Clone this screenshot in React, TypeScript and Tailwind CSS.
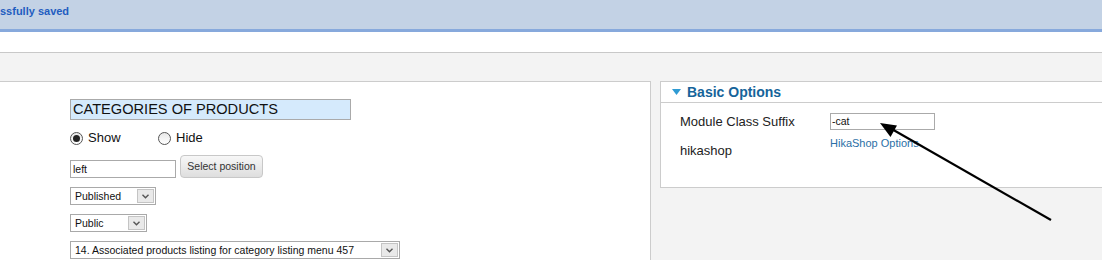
import React from "react";

const Chevron = () => (
  <svg width="7" height="5" viewBox="0 0 7 5" className="mt-[4px]">
    <path d="M0.5 0.8 L3.5 3.8 L6.5 0.8" fill="none" stroke="#555" strokeWidth="1.4" />
  </svg>
);

const Select = ({ value, width }: { value: string; width: string }) => (
  <div className={`flex h-[18px] ${width} border border-[#a9a9a9] bg-white`}>
    <div className="flex-1 pl-[4px] text-[10.5px] leading-[16px] text-[#111] whitespace-nowrap overflow-hidden">
      {value}
    </div>
    <div className="w-[17px] m-[1px] flex justify-center bg-[#e9e9e9] border border-[#c4c4c4]">
      <Chevron />
    </div>
  </div>
);

const Radio = ({ checked, label }: { checked?: boolean; label: string }) => (
  <div className="flex items-center gap-[5px]">
    <div className="w-[13px] h-[13px] rounded-full border border-[#555] bg-gradient-to-b from-[#e8e8e8] to-white flex items-center justify-center">
      {checked && <div className="w-[7px] h-[7px] rounded-full bg-[#222]" />}
    </div>
    <span className="text-[13px] text-[#111]">{label}</span>
  </div>
);

export default function App() {
  return (
    <div className="relative w-[1102px] h-[260px] overflow-hidden bg-[#f3f3f3] font-['Liberation_Sans',Arial,sans-serif]">
      {/* message bar */}
      <div className="h-[32px] bg-[#c3d2e5] border-b-[3px] border-[#87a9dc]">
        <p className="pt-[4px] text-[11px] leading-[14px] font-bold text-[#1f5dc0]">
          ssfully saved
        </p>
      </div>
      <div className="h-[21px] bg-white border-b border-[#c8c8c8]" />

      <div className="flex pt-[28px]">
        {/* left panel */}
        <div className="w-[651px] h-[200px] shrink-0 bg-white border-t border-r border-[#cccccc] pl-[70px] pt-[17px] flex flex-col items-start">
          <div className="w-[281px] h-[21px] border border-[#aaaaaa] bg-[#d5eafc] pl-[2px] text-[14.6px] leading-[19px] text-[#111]">
            CATEGORIES OF PRODUCTS
          </div>
          <div className="flex mt-[11px] h-[14px] items-center">
            <div className="w-[88px]">
              <Radio checked label="Show" />
            </div>
            <Radio label="Hide" />
          </div>
          <div className="flex items-end gap-[4px] mt-[10px]">
            <div className="w-[106px] h-[18px] border border-[#aaaaaa] bg-white pl-[2px] text-[10.5px] leading-[16px] text-[#111]">
              left
            </div>
            <button className="w-[83px] h-[23px] rounded-[4px] border border-[#c8c8c8] bg-gradient-to-b from-[#f7f7f7] to-[#dedede] text-[10.5px] text-[#333] leading-[18px] pb-[2px]">
              Select position
            </button>
          </div>
          <div className="mt-[9px]">
            <Select value="Published" width="w-[86px]" />
          </div>
          <div className="mt-[9px]">
            <Select value="Public" width="w-[77px]" />
          </div>
          <div className="mt-[9px]">
            <Select value="14. Associated products listing for category listing menu 457" width="w-[330px]" />
          </div>
        </div>

        {/* right panel */}
        <div className="ml-[9px] flex-1 h-[107px] bg-white border border-r-0 border-[#cccccc]">
          <div className="h-[21px] border-b border-[#cccccc] flex items-center pl-[11px] gap-[6px]">
            <svg width="9" height="6" viewBox="0 0 9 6">
              <path d="M0 0 H9 L4.5 6 Z" fill="#2f9bd3" />
            </svg>
            <span className="text-[14px] font-bold text-[#16649a]">Basic Options</span>
          </div>
          <div className="pl-[19px] pt-[10px]">
            <div className="flex items-center h-[17px]">
              <span className="w-[150px] text-[13px] text-[#222]">Module Class Suffix</span>
              <div className="w-[105px] h-[17px] border border-[#aaaaaa] pl-[1px] text-[10.5px] leading-[15px] text-[#111]">
                -cat
              </div>
            </div>
            <div className="flex mt-[5px]">
              <span className="w-[150px] text-[13px] text-[#222] pt-[6px]">hikashop</span>
              <span className="text-[11px] text-[#2b6fa6]">HikaShop Options</span>
            </div>
          </div>
        </div>
      </div>

      {/* annotation arrow */}
      <svg className="absolute inset-0 pointer-events-none" width="1102" height="260">
        <line x1="1051" y1="220" x2="890" y2="128" stroke="#000" strokeWidth="2.2" />
        <polygon points="880,123 897,125.5 890.5,137" fill="#000" />
      </svg>
    </div>
  );
}
